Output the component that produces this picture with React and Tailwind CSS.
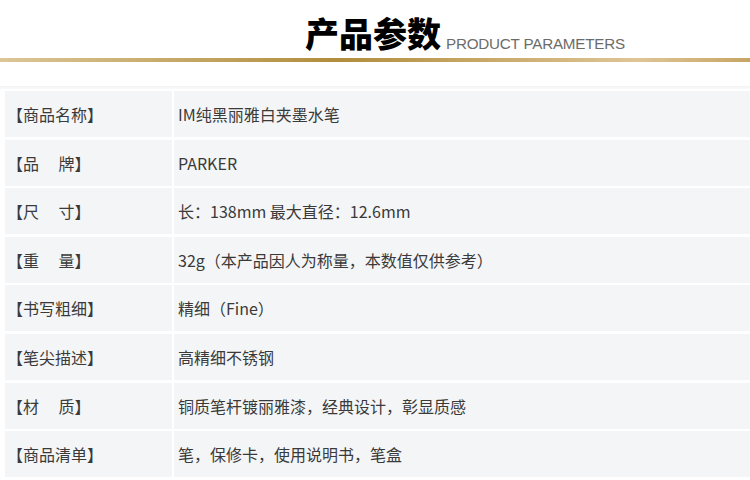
import React from "react";

const rows = [
  ["【商品名称】", "IM纯黑丽雅白夹墨水笔"],
  ["【品　 牌】", "PARKER"],
  ["【尺　 寸】", "长：138mm 最大直径：12.6mm"],
  ["【重　 量】", "32g（本产品因人为称量，本数值仅供参考）"],
  ["【书写粗细】", "精细（Fine）"],
  ["【笔尖描述】", "高精细不锈钢"],
  ["【材　 质】", "铜质笔杆镀丽雅漆，经典设计，彰显质感"],
  ["【商品清单】", "笔，保修卡，使用说明书，笔盒"],
];

export default function App() {
  return (
    <div className="w-[750px] h-[480px] overflow-hidden bg-white font-['Noto_Sans_CJK_SC',sans-serif]">
      <div className="h-[58px] flex items-baseline pl-[305px] pt-[16px]">
        <span className="text-[34px] leading-[34px] font-black text-black font-['Noto_Sans_CJK_SC',sans-serif]">
          产品参数
        </span>
        <span className="relative top-[2px] ml-[5px] text-[15.2px] leading-none text-[#6b6b6b] font-['Liberation_Sans',sans-serif] tracking-[-0.2px]">
          PRODUCT PARAMETERS
        </span>
      </div>
      <div className="h-[4px] bg-[linear-gradient(90deg,#dcc697_0%,#b18d3c_45%,#dfc596_85%,#c6a564_100%)]" />
      <div className="h-[24px]" />
      <div className="h-[3px] bg-[linear-gradient(180deg,#f2f2f2,#fbfbfb)]" />
      <div className="h-[2px]" />
      <div className="pl-[5px] flex flex-col gap-y-[2.6px]">
        {rows.map(([k, v], i) => (
          <div key={i} className="grid grid-cols-[167px_1fr] gap-x-[2px] h-[46px]">
            <div className="bg-[#f4f5f7] flex items-center pl-[2px] text-[16px] text-[#3a3a3a] whitespace-pre">
              {k}
            </div>
            <div className="bg-[#f4f5f7] flex items-center pl-[4px] text-[16px] text-[#3a3a3a]">
              {v}
            </div>
          </div>
        ))}
      </div>
    </div>
  );
}
